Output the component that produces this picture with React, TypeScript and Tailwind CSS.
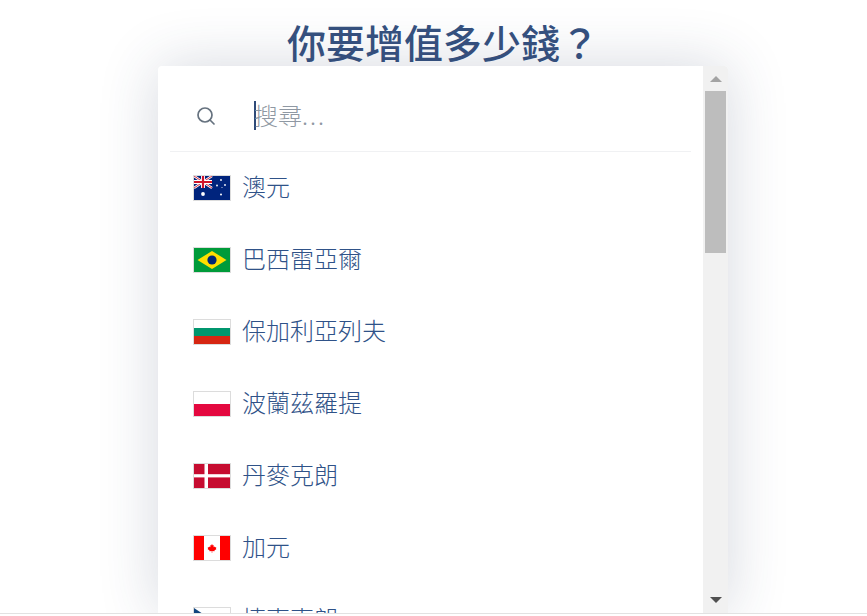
import { FC, ReactNode } from "react";

const cjk = "font-['Noto_Sans_CJK_TC','Noto_Sans_CJK_SC',sans-serif]";

const star = (cx: number, cy: number, r: number) => <circle key={`${cx}-${cy}`} cx={cx} cy={cy} r={r} fill="#fff" />;

const FlagAU = () => (
  <svg viewBox="0 0 36 24" className="block h-full w-full">
    <rect width="36" height="24" fill="#00247d" />
    <path d="M0 0 18 12M18 0 0 12" stroke="#fff" strokeWidth="2.4" />
    <path d="M0 0 18 12M18 0 0 12" stroke="#cf142b" strokeWidth="0.9" />
    <path d="M9 0V12M0 6H18" stroke="#fff" strokeWidth="4" />
    <path d="M9 0V12M0 6H18" stroke="#cf142b" strokeWidth="2.2" />
    {star(9, 18, 1.9)}
    {star(27, 4, 0.9)}
    {star(23, 9.5, 0.9)}
    {star(31, 9, 0.9)}
    {star(28, 11.5, 0.5)}
    {star(27, 18.5, 1)}
  </svg>
);

const FlagBR = () => (
  <svg viewBox="0 0 36 24" className="block h-full w-full">
    <rect width="36" height="24" fill="#009b3a" />
    <path d="M18 3 32.5 12 18 21 3.5 12Z" fill="#fedf00" />
    <circle cx="18" cy="12" r="4.6" fill="#002776" />
  </svg>
);

const FlagBG = () => (
  <svg viewBox="0 0 36 24" className="block h-full w-full">
    <rect width="36" height="8" fill="#fff" />
    <rect y="8" width="36" height="8" fill="#00966e" />
    <rect y="16" width="36" height="8" fill="#d62612" />
  </svg>
);

const FlagPL = () => (
  <svg viewBox="0 0 36 24" className="block h-full w-full">
    <rect width="36" height="12" fill="#fff" />
    <rect y="12" width="36" height="12" fill="#e4083f" />
  </svg>
);

const FlagDK = () => (
  <svg viewBox="0 0 36 24" className="block h-full w-full">
    <rect width="36" height="24" fill="#c60c30" />
    <rect x="10.5" width="3.5" height="24" fill="#fff" />
    <rect y="10.2" width="36" height="3.2" fill="#fff" />
  </svg>
);

const FlagCA = () => (
  <svg viewBox="0 0 36 24" className="block h-full w-full">
    <rect width="36" height="24" fill="#fff" />
    <rect width="10" height="24" fill="#f00" />
    <rect x="26" width="10" height="24" fill="#f00" />
    <path
      d="M18 8 18.9 9.6 19.9 9.2 19.5 11.2 20.5 10.5 21 11.3 22.3 11.2 21.9 12.5 22.5 12.9 20.4 14.5 20.6 15.3 18.3 15V16.8H17.7V15L15.4 15.3 15.6 14.5 13.5 12.9 14.1 12.5 13.7 11.2 15 11.3 15.5 10.5 16.5 11.2 16.1 9.2 17.1 9.6Z"
      fill="#f00"
    />
  </svg>
);

const FlagCZ = () => (
  <svg viewBox="0 0 36 24" className="block h-full w-full">
    <rect width="36" height="12" fill="#fff" />
    <rect y="12" width="36" height="12" fill="#d7141a" />
    <path d="M0 0 18 12 0 24Z" fill="#11457e" />
  </svg>
);

const currencies: { name: string; flag: ReactNode }[] = [
  { name: "澳元", flag: <FlagAU /> },
  { name: "巴西雷亞爾", flag: <FlagBR /> },
  { name: "保加利亞列夫", flag: <FlagBG /> },
  { name: "波蘭茲羅提", flag: <FlagPL /> },
  { name: "丹麥克朗", flag: <FlagDK /> },
  { name: "加元", flag: <FlagCA /> },
  { name: "捷克克朗", flag: <FlagCZ /> },
];

const CurrencyRow: FC<{ name: string; flag: ReactNode }> = ({ name, flag }) => (
  <div className="flex h-[72px] shrink-0 items-center pl-[35px]">
    <div className="h-[26px] w-[38px] shrink-0 border border-[#dcdcdc]">{flag}</div>
    <span className="ml-[11px] pb-[4px] text-[24px] leading-none font-light text-[#2f5288]">{name}</span>
  </div>
);

const Scrollbar = () => (
  <div className="flex w-[25px] shrink-0 flex-col items-center bg-[#f1f1f1]">
    <div className="mt-[10px] h-0 w-0 border-x-[6px] border-b-[6px] border-x-transparent border-b-[#a3a3a3]" />
    <div className="mt-[9px] h-[162px] w-[21px] bg-[#bdbdbd]" />
    <div className="mt-auto mb-[10px] h-0 w-0 border-x-[6px] border-t-[6px] border-x-transparent border-t-[#505050]" />
  </div>
);

export default function App() {
  return (
    <div className={`flex h-[616px] w-full flex-col bg-white ${cjk}`}>
      <div className="flex min-h-0 flex-1 flex-col items-center overflow-hidden border-b border-[#e2e2e2] pl-[19px]">
        <h1 className="mt-[14px] h-[52px] text-[39px] leading-[54px] font-medium whitespace-nowrap text-[#36517f]">
          你要增值多少錢？
        </h1>
        <div className="flex min-h-0 w-[570px] flex-1 overflow-hidden rounded-t-[4px] bg-white shadow-[0_0_60px_rgba(45,62,96,0.2)]">
          <div className="flex min-w-0 flex-1 flex-col">
            <div className="mx-[12px] flex h-[86px] shrink-0 items-center border-b border-[#f0f1f3] pt-[14px]">
              <svg
                viewBox="0 0 20 20"
                fill="none"
                stroke="#66727f"
                strokeWidth="1.7"
                strokeLinecap="round"
                className="ml-[26px] h-[20px] w-[20px]"
              >
                <circle cx="9" cy="9" r="7" />
                <path d="M14 14 18 18" />
              </svg>
              <div className="ml-[38px] flex h-[29px] items-center border-l-2 border-[#2f4a78]">
                <span className="-ml-[2px] pb-[2px] text-[24px] leading-none font-light text-[#8f98a3]">
                  搜尋<span className="tracking-[2px]">...</span>
                </span>
              </div>
            </div>
            <div className="flex min-h-0 flex-1 flex-col overflow-hidden">
              {currencies.map((c) => (
                <CurrencyRow key={c.name} name={c.name} flag={c.flag} />
              ))}
            </div>
          </div>
          <Scrollbar />
        </div>
      </div>
      <div className="h-[2px] shrink-0 bg-white" />
    </div>
  );
}
